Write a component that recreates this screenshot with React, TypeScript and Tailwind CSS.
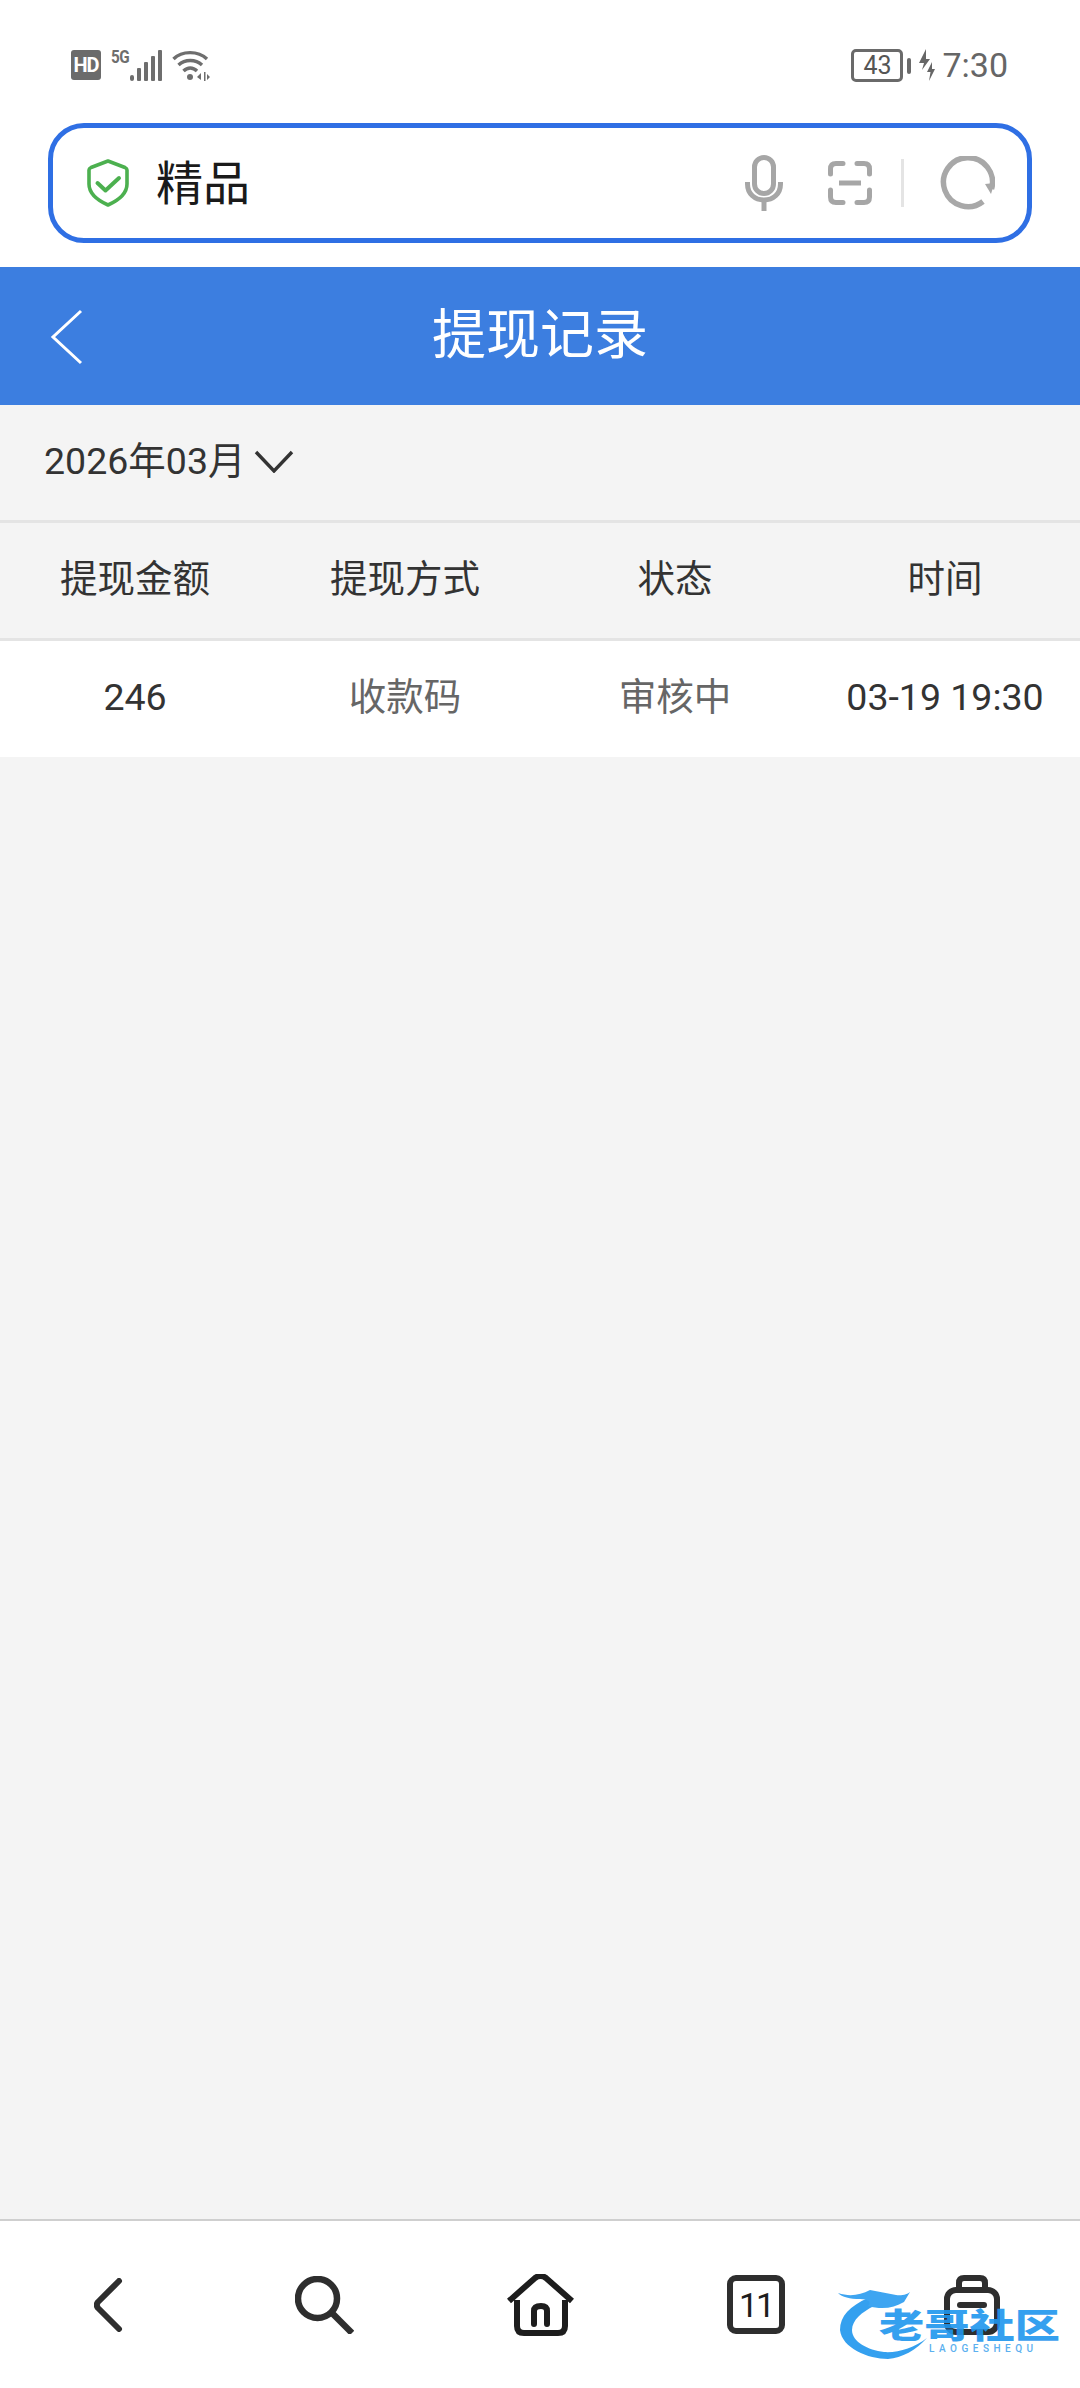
const CJK = { fontFamily: 'Roboto, "Noto Sans CJK SC", sans-serif' };

function Shield() {
  return (
    <svg width="42" height="48" viewBox="0 0 42 48" fill="none" stroke="#4cb04f" strokeWidth="3.6" strokeLinejoin="round" strokeLinecap="round">
      <path d="M21 2 L38 8.500 Q40 9.500 40 11 V25 C40 35 30 42 21 46 C12 42 2 35 2 25 V11 Q2 9.500 4 8.500 Z" />
      <path d="M10.500 24 L18.500 31.500 L32 19" strokeWidth="4" />
    </svg>
  );
}

function Mic() {
  return (
    <svg width="38" height="56" viewBox="0 0 38 56" fill="none" stroke="#a6a6a6">
      <rect x="9.500" y="2.500" width="19" height="36" rx="9.500" strokeWidth="5" />
      <path d="M2.500 27 V29 C2.500 39 10 45 19 45 C28 45 35.500 39 35.500 29 V27" strokeWidth="5" />
      <path d="M19 45 V56" strokeWidth="5" />
    </svg>
  );
}

function Scan() {
  return (
    <svg width="44" height="44" viewBox="0 0 44 44" fill="none" stroke="#a6a6a6" strokeWidth="5" strokeLinecap="round">
      <path d="M15 2.500 H8 Q2.500 2.500 2.500 8 V13" />
      <path d="M29 2.500 H36 Q41.500 2.500 41.500 8 V13" />
      <path d="M15 41.500 H8 Q2.500 41.500 2.500 36 V29" />
      <path d="M29 41.500 H36 Q41.500 41.500 41.500 36 V29" />
      <path d="M11 22 H33" strokeLinecap="butt" />
    </svg>
  );
}

function Reload() {
  return (
    <svg width="55" height="54" viewBox="0 0 55 54" fill="none">
      <path d="M43 45.500 A24.500 24.500 0 1 1 51.500 33" stroke="#a8a8a8" strokeWidth="5.500" />
      <path d="M45 28 L54.500 27 L51 38 Z" fill="#a8a8a8" />
    </svg>
  );
}

function Wifi() {
  return (
    <svg width="38" height="31" viewBox="0 0 38 31" fill="none" stroke="#6e6e6e" strokeWidth="3.400">
      <path d="M1.500 9 C10 0.500 26 0.500 35 9" />
      <path d="M6.500 15 C13 9 23.500 9 30 15" />
      <path d="M11.500 21 C15.500 17 21 17 25 21" />
      <circle cx="18" cy="27" r="3" fill="#6e6e6e" stroke="none" />
      <path d="M29 23 L25 27 L29 30 Z M32 22 H33.500 V31 H32 Z M35 24 L38 27 L35 30 Z" fill="#6e6e6e" stroke="none" />
    </svg>
  );
}

function Signal() {
  return (
    <svg width="32" height="31" viewBox="0 0 32 31" fill="#6e6e6e">
      <rect x="0" y="25" width="4" height="6" rx="2" />
      <rect x="7" y="18" width="4" height="13" rx="1" />
      <rect x="14" y="12" width="4" height="19" rx="1" />
      <rect x="21" y="6" width="4" height="25" rx="1" />
      <rect x="28" y="0" width="4" height="31" rx="1" />
    </svg>
  );
}

function Bolts() {
  return (
    <svg width="18" height="32" viewBox="0 0 18 32" fill="#666">
      <path d="M8 0 L1 14 H6 L4 21 L12 10 H8 Z" />
      <path d="M14 13 L9 23 H12.500 L11 32 L17 20 H14 Z" />
    </svg>
  );
}

function NavHome() {
  return (
    <svg width="69" height="62" viewBox="0 0 69 62" fill="none" stroke="#1d1d1d" strokeWidth="6">
      <path d="M3 27 L29 4 Q34.500 0 40 4 L66 27" />
      <path d="M11 26 V52 Q11 59 18 59 H52 Q59 59 59 52 V26" />
      <path d="M28 50 V37 Q28 32 35 32 Q41 32 41 37 V50" strokeLinecap="round" />
    </svg>
  );
}

function NavBag() {
  return (
    <svg width="56" height="60" viewBox="0 0 56 60" fill="none" stroke="#2e2e2e" strokeWidth="6">
      <rect x="3" y="15" width="50" height="42" rx="9" />
      <path d="M15 15 V8 Q15 3 20 3 H36 Q41 3 41 8 V15" />
      <path d="M16 30 H40" strokeLinecap="round" />
    </svg>
  );
}

export default function App() {
  return (
    <div className="relative flex h-[2388px] w-[1080px] flex-col overflow-hidden bg-[#f4f4f4]" style={CJK}>
      <div className="bg-white">
        <div className="flex h-[123px] items-start justify-between pt-[50px] pl-[71px] pr-[72px]">
          <div className="flex items-start">
            <div className="flex h-[30px] w-[30px] items-center justify-center rounded-[3px] bg-[#6b6b6b] text-[20px] font-bold leading-none tracking-[-1px] text-white">HD</div>
            <div className="ml-[10px] origin-left scale-x-[0.85] text-[18px] font-bold leading-[14px] tracking-[-0.500px] text-[#6e6e6e]">5G</div>
            <div className="ml-[-3px]"><Signal /></div>
            <div className="ml-[10px]"><Wifi /></div>
          </div>
          <div className="flex items-start">
            <div className="mt-[-1px] flex h-[33px] w-[52px] items-center justify-center rounded-[5px] border-[3px] border-[#6a6a6a] text-[25px] leading-none text-[#555]">43</div>
            <div className="ml-[4px] mt-[8px] h-[16px] w-[4px] rounded-[2px] bg-[#6a6a6a]" />
            <div className="ml-[7px] mt-[-1px]"><Bolts /></div>
            <div className="ml-[6px] text-[34px] leading-[31px] text-[#666]">7:30</div>
          </div>
        </div>
        <div className="px-[48px] pb-[24px]">
          <div className="flex h-[120px] items-center rounded-[36px] border-[5px] border-[#2f6fe4] pl-[34px]">
            <Shield />
            <div className="ml-[27px] text-[47px] leading-none text-[#1a1a1a]">精品</div>
            <div className="ml-auto flex items-center">
              <Mic />
              <div className="ml-[45px]"><Scan /></div>
              <div className="ml-[29px] h-[48px] w-[3px] bg-[#e4e4e4]" />
              <div className="ml-[36px] mr-[32px]"><Reload /></div>
            </div>
          </div>
        </div>
      </div>

      <div className="relative flex h-[138px] items-center justify-center bg-[#3c7ee0]">
        <svg className="absolute left-[50px] top-[42px]" width="34" height="56" viewBox="0 0 34 56" fill="none" stroke="#fff" strokeWidth="3">
          <path d="M31 2 L3 28 L31 54" />
        </svg>
        <div className="text-[54px] leading-none text-white">提现记录</div>
      </div>

      <div className="flex h-[115px] items-center pb-[2px] pl-[44px] text-[37.500px] text-[#333]">
        <span>2026年03月</span>
        <svg className="ml-[9px]" width="40" height="23" viewBox="0 0 40 23" fill="none" stroke="#333" strokeWidth="3.400">
          <path d="M2 2 L20 21 L38 2" />
        </svg>
      </div>

      <div className="grid h-[121px] grid-cols-4 items-center border-y-[3px] border-[#e4e4e4] pb-[3px] text-center text-[37.500px] text-[#333]">
        <div>提现金额</div>
        <div>提现方式</div>
        <div>状态</div>
        <div>时间</div>
      </div>

      <div className="grid h-[116px] grid-cols-4 items-center bg-white pb-[3px] text-center text-[37.500px]">
        <div className="text-[#333]">246</div>
        <div className="text-[#666]">收款码</div>
        <div className="text-[#666]">审核中</div>
        <div className="text-[#333]">03-19 19:30</div>
      </div>

      <div className="flex-1" />

      <div className="grid h-[169px] grid-cols-5 items-center border-t-[2px] border-[#cfcfcf] bg-white">
        <div className="flex justify-center">
          <svg width="29" height="54" viewBox="0 0 29 54" fill="none" stroke="#2e2e2e" strokeWidth="6" strokeLinecap="round" strokeLinejoin="round">
            <path d="M25 3 L4 24 Q1.500 27 4 30 L25 51" />
          </svg>
        </div>
        <div className="flex justify-center">
          <svg width="59" height="58" viewBox="0 0 59 58" fill="none" stroke="#2e2e2e" strokeWidth="6.500">
            <circle cx="22.500" cy="22.500" r="19.500" />
            <path d="M37 37 L57 57" />
          </svg>
        </div>
        <div className="flex justify-center"><NavHome /></div>
        <div className="flex justify-center">
          <div className="flex h-[59px] w-[58px] items-center justify-center rounded-[9px] border-[6px] border-[#2e2e2e] text-[34px] leading-none tracking-[-2px] text-[#1d1d1d]">11</div>
        </div>
        <div className="flex justify-center"><NavBag /></div>
      </div>

      <div className="absolute left-[838px] top-[2288px] h-[72px] w-[226px] opacity-90">
        <svg className="absolute left-0 top-0" width="90" height="72" viewBox="0 0 90 72" fill="none">
          <path d="M30 10 C12 18 2 28 2 42 C4 60 30 71 50 71 C64 70 78 62 89 50 C76 60 60 65 46 64 C30 62 14 54 14 42 C14 32 24 24 36 18 Z" fill="#1f96ee" />
          <path d="M0 5 C12 9 22 7 32 2 L58 7 C64 8 70 6 72 4 L66 14 C56 20 44 22 30 18 C34 14 30 11 22 11 C12 11 4 9 0 5 Z" fill="#2a9cf0" />
        </svg>
        <div className="absolute left-[41px] top-[23px] origin-left scale-x-[1.33] text-[34px] font-black leading-[30px] text-[#1f96ee]">老哥社区</div>
        <div className="absolute left-[91px] top-[56px] text-[10px] font-medium leading-none tracking-[4.500px] text-[#4aa8ee]">LAOGESHEQU</div>
      </div>
    </div>
  );
}
